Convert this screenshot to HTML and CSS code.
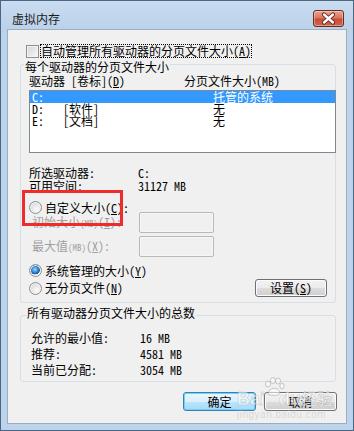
FILE: index.html
```html
<!DOCTYPE html>
<html lang="zh-CN">
<head>
  <meta charset="UTF-8" />
  <title>虚拟内存</title>
  <link rel="stylesheet" href="styles.css">
</head>
<body>
  <div class="window">
    <div class="titlebar">
      <span class="title">虚拟内存</span>
      <div class="close">
        <svg width="29" height="15" viewBox="0 0 29 15">
          <path d="M10 3.5 L19 11.5 M19 3.5 L10 11.5" stroke="#5a2219" stroke-width="4.2" stroke-linecap="round"/>
          <path d="M10 3.5 L19 11.5 M19 3.5 L10 11.5" stroke="#ffffff" stroke-width="2.4" stroke-linecap="round"/>
        </svg>
      </div>
    </div>

    <div class="client">
      <div class="auto-row">
        <span class="checkbox"></span>
        <span class="focus">自动管理所有驱动器的分页文件大小(<u>A</u>)</span>
      </div>

      <fieldset class="group group-drives">
        <legend>每个驱动器的分页文件大小</legend>
        <div class="list-head">
          <span class="col-drive">驱动器 [卷标](<u>D</u>)</span>
          <span>分页文件大小(MB)</span>
        </div>
        <div class="listbox">
          <div class="row selected"><span class="c-drive">C:</span><span class="c-label"></span><span>托管的系统</span></div>
          <div class="row"><span class="c-drive">D:</span><span class="c-label">[软件]</span><span>无</span></div>
          <div class="row"><span class="c-drive">E:</span><span class="c-label">[文档]</span><span>无</span></div>
        </div>

        <div class="info">
          <div class="info-row"><span class="info-label">所选驱动器:</span><span>C:</span></div>
          <div class="info-row"><span class="info-label">可用空间:</span><span>31127 MB</span></div>
        </div>

        <div class="radio-row custom">
          <span class="radio"></span>
          <span>自定义大小(<u>C</u>):</span>
        </div>
        <div class="size-row">
          <span class="size-label">初始大小<span class="small">(MB)</span>(<u>I</u>):</span>
          <span class="textbox"></span>
        </div>
        <div class="size-row second">
          <span class="size-label">最大值<span class="small">(MB)</span>(<u>X</u>):</span>
          <span class="textbox"></span>
        </div>

        <div class="radio-row managed">
          <span class="radio checked"></span>
          <span>系统管理的大小(<u>Y</u>)</span>
        </div>
        <div class="last-row">
          <div class="radio-row">
            <span class="radio"></span>
            <span>无分页文件(<u>N</u>)</span>
          </div>
          <button class="btn btn-set">设置(<u>S</u>)</button>
        </div>
      </fieldset>

      <fieldset class="group group-total">
        <legend>所有驱动器分页文件大小的总数</legend>
        <div class="total-row"><span class="total-label">允许的最小值:</span><span>16 MB</span></div>
        <div class="total-row"><span class="total-label">推荐:</span><span>4581 MB</span></div>
        <div class="total-row"><span class="total-label">当前已分配:</span><span>3054 MB</span></div>
      </fieldset>

      <div class="buttons">
        <button class="btn btn-default">确定</button>
        <button class="btn">取消</button>
      </div>
    </div>

    <div class="mark"></div>

    <div class="watermark">
      <span class="wm-logo">Bai<svg width="22" height="20" viewBox="0 0 22 20">
        <g fill="rgba(255,255,255,0.55)" stroke="rgba(150,150,150,0.5)" stroke-width="1">
          <ellipse cx="5" cy="7" rx="2.5" ry="3"/>
          <ellipse cx="10" cy="3.5" rx="2.5" ry="3"/>
          <ellipse cx="15" cy="4" rx="2.5" ry="3"/>
          <ellipse cx="19" cy="9" rx="2.2" ry="2.8"/>
          <path d="M5 17 C6 10 15 9 17 16 C17 19 7 19 5 17 Z"/>
        </g>
      </svg>du</span><span class="wm-cn">经验</span>
      <span class="wm-url">jingyan.baidu.com</span>
    </div>
  </div>
</body>
</html>
```

FILE: styles.css
```css
* { box-sizing: border-box; margin: 0; padding: 0; }
body {
  width: 354px; height: 431px; overflow: hidden;
  background: #fff; color: #000;
  font: 12px/12px "Noto Sans Mono CJK SC", "Noto Sans CJK SC", sans-serif;
}
u { text-decoration: underline; }

.window {
  position: relative;
  width: 354px; height: 431px;
  border: 1px solid #4b6682;
  background: #bcd3eb;
  padding: 0 6px 6px;
  display: flex; flex-direction: column;
}
.titlebar {
  height: 28px;
  margin: 0 -6px;
  padding: 9px 9px 0 11px;
  display: flex; justify-content: space-between; align-items: flex-start;
  background: linear-gradient(#c9dcf0, #bbd2ea);
}
.title { margin-top: 3px; color: #1b1b1b; }
.close {
  width: 31px; height: 17px;
  border: 1px solid #6a2a21;
  border-radius: 3px;
  background: linear-gradient(#e9a695 0%, #d9755f 45%, #c84b35 55%, #d0674e 100%);
  box-shadow: inset 0 0 0 1px rgba(255,255,255,0.35);
}
.close svg { display: block; }

.client {
  flex: 1;
  background: #f0f0f0;
  border: 1px solid #9aaec6;
  display: flex; flex-direction: column;
}

.auto-row {
  display: flex; align-items: center;
  height: 16px;
  margin: 13px 0 0 18px;
}
.checkbox {
  width: 13px; height: 13px;
  border: 1px solid #8e8f8f;
  background: linear-gradient(135deg, #d4d4d4, #f8f8f8);
  box-shadow: inset 0 0 0 1px #f4f4f4;
}
.focus {
  margin-left: 1px;
  padding: 1px 1px;
  outline: 1px dotted #000;
  outline-offset: -1px;
}

.group {
  border: 1px solid #d5dfe5;
  border-radius: 3px;
  min-width: 0;
}
.group legend {
  margin-left: -5px;
  padding: 6px 1px 0;
  line-height: 12px;
}
.group-drives {
  margin: -4px 10px 0 12px;
  padding: 2px 0 5px 8px;
}
.list-head { display: flex; height: 12px; }
.col-drive { width: 155px; }

.listbox {
  margin: 3px -1px 0 0;
  height: 63px;
  border: 1px solid #828790;
  background: #fff;
}
.row { display: flex; height: 12px; padding-left: 2px; }
.row.selected { background: #3399ff; color: #fff; }
.c-drive { width: 31px; }
.c-label { width: 150px; }

.info { margin-top: 14px; }
.info-row { display: flex; height: 13px; }
.info-label { width: 109px; }

.radio-row { display: flex; align-items: center; height: 13px; }
.radio-row .radio { margin-right: 3px; }
.custom { margin-top: 8px; }
.managed { margin-top: 7px; }
.radio {
  width: 13px; height: 13px;
  border: 1px solid #8e8f8f;
  border-radius: 50%;
  background: radial-gradient(circle at 60% 65%, #fbfbfb 0%, #e2e2e2 55%, #cdcdcd 100%);
  box-shadow: inset 0 0 0 1px #f3f3f3;
}
.radio.checked {
  background:
    radial-gradient(circle at 45% 40%, #9fd8ff 0%, #2f86d6 35%, #1a4f93 55%, transparent 58%),
    radial-gradient(circle at 60% 65%, #fbfbfb 0%, #e2e2e2 55%, #cdcdcd 100%);
}

.size-row {
  display: flex; align-items: center;
  height: 21px;
  margin-top: -2px;
  color: #a0a0a0;
}
.size-row.second { margin-top: 3px; }
.size-label { width: 110px; padding-left: 3px; }
.small { font-size: 9px; }
.textbox {
  width: 75px; height: 21px;
  border: 1px solid #b9b9b9;
  border-radius: 2px;
  background: #f0f0f0;
  box-shadow: inset 0 0 0 1px #f7f7f7;
}

.last-row {
  display: flex; align-items: center; justify-content: space-between;
  height: 18px;
  margin-top: 2px;
}

.btn {
  font: inherit;
  color: #000;
  border: 1px solid #707070;
  border-radius: 3px;
  background: linear-gradient(#f2f2f2 0%, #ebebeb 50%, #dddddd 50%, #cfcfcf 100%);
  box-shadow: inset 0 0 0 1px #fbfbfb;
}
.btn-set { width: 72px; height: 18px; margin-right: 8px; }

.group-total {
  margin: 4px 10px 0 12px;
  padding: 6px 0 3px 10px;
}
.group-total legend { padding: 0 1px 5px; }
.total-row { display: flex; height: 16px; line-height: 16px; }
.total-label { width: 109px; }

.buttons {
  display: flex; justify-content: flex-end; gap: 8px;
  margin: 10px 9px 0 0;
}
.buttons .btn { width: 73px; height: 19px; }
.btn-default {
  border-color: #3c7fb1;
  background: linear-gradient(#eaf6fd 0%, #d9f0fc 50%, #bee6fd 50%, #a7d9f5 100%);
  box-shadow: inset 0 0 0 1px #6fd3f7;
}

.mark {
  position: absolute;
  left: 21px; top: 189px;
  width: 101px; height: 36px;
  border: 3px solid #ef2b2b;
}

.watermark {
  position: absolute;
  left: 236px; top: 376px;
  width: 100px;
  color: rgba(255,255,255,0.6);
  pointer-events: none;
}
.wm-logo {
  font: bold 18px/20px "Liberation Sans", sans-serif;
  -webkit-text-stroke: 0.6px rgba(140,140,140,0.45);
}
.wm-logo svg { vertical-align: 8px; margin: 0 -6px 0 -2px; }
.wm-cn {
  font: bold 16px/20px "Noto Sans CJK SC", sans-serif;
  -webkit-text-stroke: 0.6px rgba(140,140,140,0.45);
}
.wm-url {
  display: block;
  font: 10px/11px "Liberation Sans", sans-serif;
  color: rgba(190,190,190,0.5);
  letter-spacing: 0.5px;
}
```
